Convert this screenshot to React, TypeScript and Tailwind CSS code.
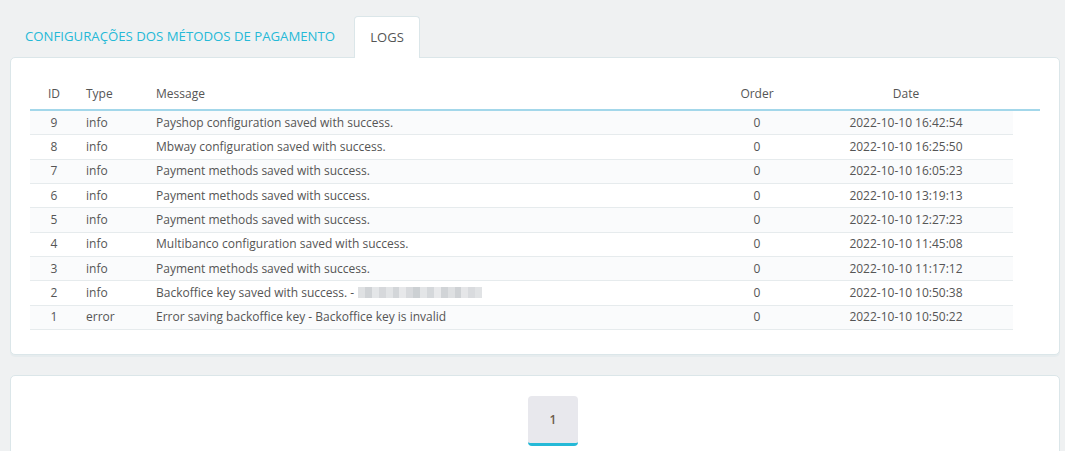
import React from "react";

const rows = [
  { id: 9, type: "info", msg: "Payshop configuration saved with success.", date: "2022-10-10 16:42:54" },
  { id: 8, type: "info", msg: "Mbway configuration saved with success.", date: "2022-10-10 16:25:50" },
  { id: 7, type: "info", msg: "Payment methods saved with success.", date: "2022-10-10 16:05:23" },
  { id: 6, type: "info", msg: "Payment methods saved with success.", date: "2022-10-10 13:19:13" },
  { id: 5, type: "info", msg: "Payment methods saved with success.", date: "2022-10-10 12:27:23" },
  { id: 4, type: "info", msg: "Multibanco configuration saved with success.", date: "2022-10-10 11:45:08" },
  { id: 3, type: "info", msg: "Payment methods saved with success.", date: "2022-10-10 11:17:12" },
  { id: 2, type: "info", msg: "Backoffice key saved with success. -", blur: true, date: "2022-10-10 10:50:38" },
  { id: 1, type: "error", msg: "Error saving backoffice key - Backoffice key is invalid", date: "2022-10-10 10:50:22" },
];

function Blurred() {
  const blocks = ["#dfe1e3", "#d0d3d6", "#e4e6e8", "#d6d8db", "#e2e4e6", "#d3d6d9", "#e7e8ea", "#d8dadd", "#ccd0d3", "#e3e5e7", "#d5d8db", "#e8e9eb", "#d1d4d7", "#dee0e2", "#cfd2d5", "#e5e6e8", "#d9dbde", "#e1e3e5"];
  return (
    <span className="ml-[4px] inline-flex h-[11px] w-[124px]">
      {blocks.map((c, i) => (
        <span key={i} className="h-full flex-1" style={{ background: c }} />
      ))}
    </span>
  );
}

export default function App() {
  return (
    <div className="h-[451px] w-full bg-[#eff1f2] text-[#555] font-['Open_Sans',sans-serif] text-[12px] overflow-hidden">
      <div className="pl-[10px] pr-[5px] pt-[16px]">
        {/* tabs */}
        <div className="flex items-end h-[41px]">
          <div className="h-[41px] pl-[15px] pr-[19px] flex items-center text-[13.2px] text-[#25b9d7]">
            CONFIGURAÇÕES DOS MÉTODOS DE PAGAMENTO
          </div>
          <div className="relative z-10 h-[42px] w-[66px] -mb-px bg-white border border-b-0 border-[#dbe6e9] rounded-t-[4px] flex items-center justify-center text-[13px] text-[#555]">
            LOGS
          </div>
        </div>
        {/* panel */}
        <div className="bg-white border border-[#dbe6e9] rounded-[5px] shadow-[0_2px_0_#e6ecee] px-[19px] pt-[21px] pb-[25px] h-[298px]">
          <div className="w-[1010px]">
            <div className="flex h-[32px] items-center border-b-2 border-[#a3d7ea]">
              <div className="w-[48px] text-center">ID</div>
              <div className="w-[71px] pl-[8px]">Type</div>
              <div className="w-[566px] pl-[7px]">Message</div>
              <div className="w-[84px] text-center">Order</div>
              <div className="w-[214px] text-center">Date</div>
            </div>
            {rows.map((r, i) => (
              <div
                key={r.id}
                className={`flex w-[983px] h-[24.33px] items-center border-b border-[#e6ebed] ${i % 2 === 0 ? "bg-[#fafbfc]" : "bg-white"}`}
              >
                <div className="w-[48px] text-center">{r.id}</div>
                <div className="w-[71px] pl-[8px]">{r.type}</div>
                <div className="w-[566px] pl-[7px] whitespace-nowrap flex items-center">
                  {r.msg}
                  {r.blur && <Blurred />}
                </div>
                <div className="w-[84px] text-center">0</div>
                <div className="w-[214px] text-center">{r.date}</div>
              </div>
            ))}
          </div>
        </div>
        {/* pagination panel */}
        <div className="mt-[20px] bg-white border border-[#dbe6e9] rounded-[5px] h-[100px] pt-[20px]">
          <div className="ml-[517px] w-[50px] h-[50px] bg-[#e8e8ed] rounded-[4px] border-b-[3px] border-[#25b9d7] flex items-center justify-center text-[12px] text-[#6c5a4a] font-semibold">
            1
          </div>
        </div>
      </div>
    </div>
  );
}
